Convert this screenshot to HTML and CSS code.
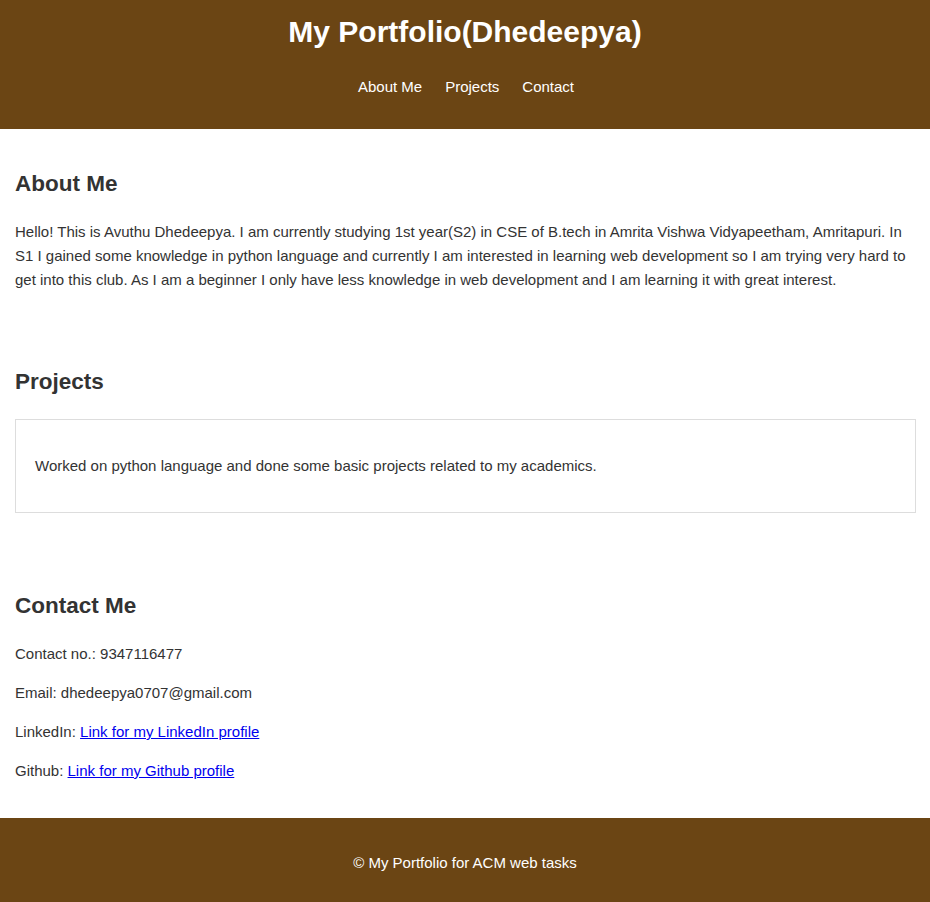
FILE: index.html
```html
<!DOCTYPE html>
<html lang="en">
<head>
<meta charset="utf-8">
<title>My Portfolio</title>
<link rel="stylesheet" href="styles.css">
</head>
<body>
<header class="site-header">
  <h1 class="site-title">My Portfolio(Dhedeepya)</h1>
  <nav class="site-nav">
    <a href="#about">About Me</a>
    <a href="#projects">Projects</a>
    <a href="#contact">Contact</a>
  </nav>
</header>
<main class="content">
  <section class="section" id="about">
    <h2 class="section-title">About Me</h2>
    <p class="text">Hello! This is Avuthu Dhedeepya. I am currently studying 1st year(S2) in CSE of B.tech in Amrita Vishwa Vidyapeetham, Amritapuri. In S1 I gained some knowledge in python language and currently I am interested in learning web development so I am trying very hard to get into this club. As I am a beginner I only have less knowledge in web development and I am learning it with great interest.</p>
  </section>
  <section class="section" id="projects">
    <h2 class="section-title projects-title">Projects</h2>
    <div class="project-box">
      <p class="text">Worked on python language and done some basic projects related to my academics.</p>
    </div>
  </section>
  <section class="section" id="contact">
    <h2 class="section-title">Contact Me</h2>
    <p class="text">Contact no.: 9347116477</p>
    <p class="text">Email: dhedeepya0707@gmail.com</p>
    <p class="text">LinkedIn: <a class="link" href="#">Link for my LinkedIn profile</a></p>
    <p class="text">Github: <a class="link" href="#">Link for my Github profile</a></p>
  </section>
</main>
<footer class="site-footer">
  <p class="footer-text">&copy; My Portfolio for ACM web tasks</p>
</footer>
</body>
</html>
```
FILE: styles.css
```css
* { box-sizing: border-box; }

body {
  margin: 0;
  font-family: "Liberation Sans", Arial, sans-serif;
  font-size: 15px;
  color: #333333;
  background: #ffffff;
}

.site-header {
  background: #6b4514;
  color: #ffffff;
  text-align: center;
  padding: 15px 0 34px;
}

.site-title {
  margin: 0;
  font-size: 30px;
  font-weight: bold;
  line-height: 34.5px;
}

.site-nav {
  display: flex;
  justify-content: center;
  gap: 23px;
  padding-top: 28.5px;
  padding-left: 2px;
  line-height: 17px;
}

.site-nav a {
  color: #ffffff;
  text-decoration: none;
  font-size: 15px;
}

.content {
  padding: 0 14px 0 15px;
}

.section {
  padding: 20px 0;
}

.section-title {
  margin: 22px 0 23px;
  font-size: 22.5px;
  font-weight: bold;
  line-height: 26px;
  color: #333333;
}

.projects-title {
  margin-bottom: 24px;
}

.text {
  margin: 0 0 15px;
  line-height: 24px;
}

.project-box {
  border: 1px solid #dddddd;
  padding: 19px;
  margin-bottom: 18px;
}

.project-box .text {
  margin: 15px 0;
}

.link {
  color: #0000ee;
  text-decoration: underline;
}

.site-footer {
  background: #6b4514;
  color: #ffffff;
  text-align: center;
  padding: 18px 0;
}

.footer-text {
  margin: 15px 0;
  line-height: 24px;
}
```
